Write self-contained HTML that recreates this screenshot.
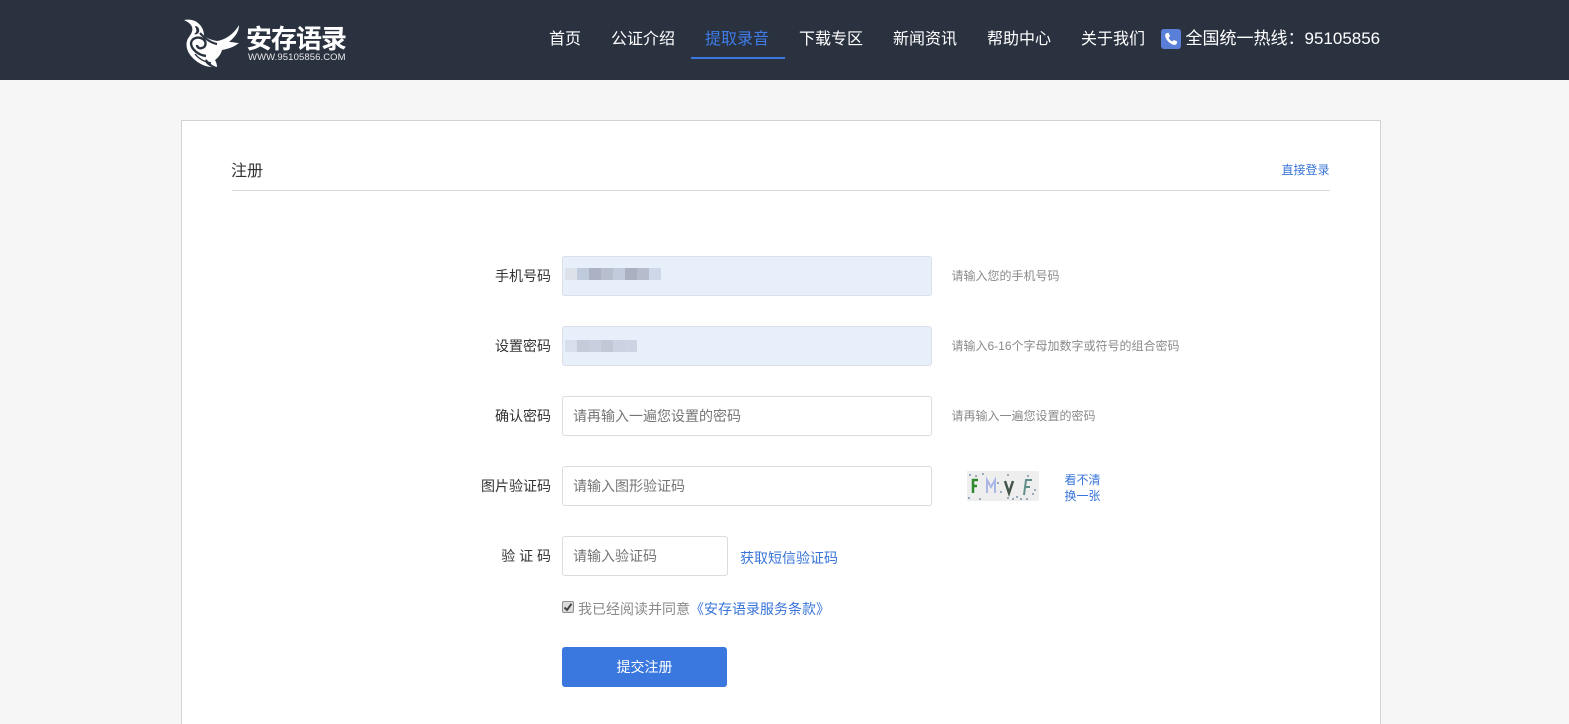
<!DOCTYPE html>
<html lang="zh-CN">
<head>
<meta charset="utf-8">
<title>注册</title>
<style>
html,body{margin:0;padding:0;width:1569px;height:724px;overflow:hidden;}
#wrap{position:relative;width:1569px;height:724px;overflow:hidden;background:#f6f6f6;font-family:"Liberation Sans","Noto Sans CJK SC",sans-serif;font-size:14px;color:#333;}
.a{position:absolute;white-space:nowrap;}
#hd{position:absolute;left:0;top:0;width:1569px;height:80px;background:#2a3240;}
.nav{position:absolute;top:29px;font-size:16px;line-height:22px;color:#fff;white-space:nowrap;}
#card{position:absolute;left:181px;top:120px;width:1198px;height:604px;box-sizing:content-box;background:#fff;border:1px solid #d2d2d2;border-bottom:0;}
.lab{position:absolute;right:1018px;font-size:14px;line-height:20px;color:#333;white-space:nowrap;}
.inp{position:absolute;left:562px;width:368px;height:38px;border:1px solid #dcdcdc;border-radius:3px;background:#fff;font-size:14px;line-height:39px;color:#757575;text-indent:10px;white-space:nowrap;}
.fill{background:#e7effb;border-color:#dcdfe8;}
.tip{position:absolute;left:951.5px;font-size:12px;line-height:20px;color:#8a8a8a;white-space:nowrap;}
.lnk{color:#3874d8;}
.px{position:absolute;height:12px;}
</style>
</head>
<body>
<div id="wrap">
<div id="hd"></div>

<svg class="a" style="left:184px;top:18px" width="58" height="50" viewBox="0 0 58 50">
<path fill="#fff" d="M0 2 C5 1 11 2 14 5 C18 8 20 13 20 18 C24 21 28 22 33 23 C41 22 50 16 55 7 C55 14 51 19 45 24 C49 24 52 25 55 25 C50 29 44 31 38 32 C37 36 34 40 31 42 C32 44 33 46 33 49 C28 48 25 44 22 41 C20 44 23 47 28 49 C20 49 12 44 7 38 C2 32 1 24 5 19 C8 15 9 12 8 9 C7 6 4 4 0 2 Z"/>
<path fill="#2a3240" d="M11 8 C14 8 16 11 15 14 C14 16 12 17 10 16 C12 15 13 13 12 11 C12 10 11 9 11 8 Z"/>
<path fill="none" stroke="#2a3240" stroke-width="2.2" d="M16 15 C20 20 27 25 33 26"/>
<path fill="none" stroke="#2a3240" stroke-width="2.4" d="M22 38 C14 37 7 31 7 25 C8 20 14 18 19 21 C23 24 22 29 18 30 C15 31 13 29 13 27"/>
<path fill="none" stroke="#2a3240" stroke-width="1.4" d="M11 36 C15 41 21 44 27 45"/>
</svg>

<div class="a" style="left:246px;top:22px;font-size:26px;line-height:34px;font-weight:700;color:#fff;letter-spacing:-1px">安存语录</div>
<div class="a" style="left:248px;top:52px;font-size:9.5px;line-height:12px;color:#e8e8e8;letter-spacing:.1px">WWW.95105856.COM</div>

<div class="nav" style="left:549px">首页</div>
<div class="nav" style="left:611px">公证介绍</div>
<div class="nav" style="left:705px;color:#3f7ce8">提取录音</div>
<div class="a" style="left:691px;top:57px;width:94px;height:2px;background:#3a78e0"></div>
<div class="nav" style="left:799px">下载专区</div>
<div class="nav" style="left:893px">新闻资讯</div>
<div class="nav" style="left:987px">帮助中心</div>
<div class="nav" style="left:1081px">关于我们</div>

<svg class="a" style="left:1161px;top:29px" width="20" height="20" viewBox="0 0 21 21">
<rect x="0" y="0" width="21" height="21" rx="3" fill="#5a7fd8"/>
<path fill="#fff" d="M5.5 4.5 L8 4 L9.5 7.5 L8 9 C8.6 10.8 10.2 12.4 12 13 L13.5 11.5 L17 13 L16.5 15.5 C16 16.5 14.5 17 13 16.5 C9 15.300 5.700 12 4.500 8 C4 6.500 4.500 5 5.500 4.500 Z"/>
</svg>
<div class="nav" style="left:1185.500px;font-size:17px;top:28px;line-height:22px">全国统一热线：95105856</div>

<div id="card"></div>
<div class="a" style="left:231px;top:162px;font-size:16px;line-height:20px;color:#333">注册</div>
<div class="a lnk" style="left:1281.500px;top:161px;font-size:12px;line-height:18px">直接登录</div>
<div class="a" style="left:232px;top:190px;width:1098px;height:1px;background:#d8d8d8"></div>

<div class="lab" style="top:266px">手机号码</div>
<div class="inp fill" style="top:256px"></div>
<div class="px" style="left:565px;top:268px;width:12px;background:#dde1ea"></div>
<div class="px" style="left:577px;top:268px;width:12px;background:#bfcadc"></div>
<div class="px" style="left:589px;top:268px;width:12px;background:#aab2c3"></div>
<div class="px" style="left:601px;top:268px;width:12px;background:#b7bfcf"></div>
<div class="px" style="left:613px;top:268px;width:12px;background:#c2cbdc"></div>
<div class="px" style="left:625px;top:268px;width:12px;background:#aab0bf"></div>
<div class="px" style="left:637px;top:268px;width:12px;background:#b6bccb"></div>
<div class="px" style="left:649px;top:268px;width:12px;background:#cdd7e8"></div>
<div class="tip" style="top:266px">请输入您的手机号码</div>

<div class="lab" style="top:336px">设置密码</div>
<div class="inp fill" style="top:326px"></div>
<div class="px" style="left:565px;top:340px;width:12px;background:#d7dfec"></div>
<div class="px" style="left:577px;top:340px;width:12px;background:#c6cbd9"></div>
<div class="px" style="left:589px;top:340px;width:12px;background:#c8d0e0"></div>
<div class="px" style="left:601px;top:340px;width:12px;background:#c3c8d6"></div>
<div class="px" style="left:613px;top:340px;width:12px;background:#cbd2e1"></div>
<div class="px" style="left:625px;top:340px;width:12px;background:#cdd4e3"></div>
<div class="tip" style="top:336px">请输入6-16个字母加数字或符号的组合密码</div>

<div class="lab" style="top:406px">确认密码</div>
<div class="inp" style="top:396px">请再输入一遍您设置的密码</div>
<div class="tip" style="top:406px">请再输入一遍您设置的密码</div>

<div class="lab" style="top:476px">图片验证码</div>
<div class="inp" style="top:466px">请输入图形验证码</div>

<svg class="a" style="left:967px;top:471px" width="72" height="30" viewBox="0 0 72 30">
<rect width="72" height="30" fill="#eeeeee"/>
<path d="M6 22V9H11M6 15H10" fill="none" stroke="#2f8a2f" stroke-width="2.500"/>
<path d="M20 22V9L24 16L28 9V22" fill="none" stroke="#a9b6e6" stroke-width="2"/>
<path d="M38 10L42 22L46 10" fill="none" stroke="#44564c" stroke-width="2.500"/>
<path d="M57 24L59 9H65M58 16H63" fill="none" stroke="#5f8f88" stroke-width="2"/>
<g fill="#7f93a8">
<circle cx="3" cy="4" r="1"/><circle cx="9" cy="5" r="1"/><circle cx="16" cy="3" r="1"/><circle cx="41" cy="4" r="1"/><circle cx="61" cy="5" r="1"/><circle cx="2" cy="27" r="1"/><circle cx="13" cy="28" r="1"/><circle cx="41" cy="27" r="1"/><circle cx="46" cy="28" r="1"/><circle cx="50" cy="26" r="1"/><circle cx="54" cy="28" r="1"/><circle cx="60" cy="28" r="1"/><circle cx="66" cy="23" r="1"/><circle cx="68" cy="19" r="1"/><circle cx="31" cy="12" r="1"/><circle cx="34" cy="21" r="1"/>
</g>
</svg>
<div class="a lnk" style="left:1064.500px;top:472px;font-size:12px;line-height:16px">看不清<br>换一张</div>

<div class="lab" style="top:546px">验 证 码</div>
<div class="inp" style="top:536px;width:164px">请输入验证码</div>
<div class="a lnk" style="left:740px;top:548px;font-size:14px;line-height:20px">获取短信验证码</div>

<svg class="a" style="left:562px;top:601px" width="12" height="12" viewBox="0 0 12 12">
<rect x=".5" y=".5" width="11" height="11" rx="1.500" fill="#dcdcdc" stroke="#8f8f8f"/>
<path d="M2.500 6.500L5 9L9.500 2.800" fill="none" stroke="#444" stroke-width="2"/>
</svg>
<div class="a" style="left:578px;top:599px;font-size:14px;line-height:20px;color:#8a8a8a">我已经阅读并同意<span class="lnk">《安存语录服务条款》</span></div>

<div class="a" style="left:562px;top:647px;width:165px;height:40px;background:#3a78e0;border-radius:3px;color:#fff;font-size:14px;line-height:41px;text-align:center">提交注册</div>
</div>
</body>
</html>
